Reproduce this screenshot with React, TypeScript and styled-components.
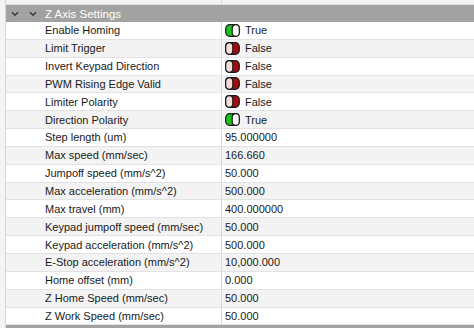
import React from "react";
import styled, { createGlobalStyle } from "styled-components";

const GlobalStyle = createGlobalStyle`
  html, body {
    margin: 0;
    padding: 0;
    background: #ffffff;
    overflow: hidden;
  }
  body {
    font-family: "Liberation Sans", Arial, sans-serif;
    font-size: 11px;
    color: #1a1a1a;
  }
`;

const Frame = styled.div`
  width: 474px;
  height: 328px;
  display: flex;
  background: #f0f0f0;
  overflow: hidden;
`;

const Gutter = styled.div`
  width: 5px;
  flex: 0 0 5px;
  background: #f4f4f4;
  border-right: 1px solid #d6d6d6;
`;

const Grid = styled.div`
  flex: 1;
  display: flex;
  flex-direction: column;
  background: #ffffff;
`;

const Row = styled.div<{ $alt?: boolean }>`
  display: flex;
  height: 17.85px;
  flex: 0 0 auto;
  background: ${(p) => (p.$alt ? "#f3f3f3" : "#ffffff")};
  border-bottom: 1px solid #e2e2e2;
  box-sizing: border-box;
`;

const NameCell = styled.div`
  width: 216px;
  flex: 0 0 216px;
  padding-left: 39px;
  box-sizing: border-box;
  border-right: 1px solid #d9d9d9;
  display: flex;
  align-items: center;
  white-space: nowrap;
  overflow: hidden;
`;

const ValueCell = styled.div`
  flex: 1;
  display: flex;
  align-items: center;
  padding-left: 3px;
  gap: 5px;
  white-space: nowrap;
`;

const PartialRow = styled(Row)`
  height: 5px;
`;

const Header = styled.div`
  height: 17px;
  flex: 0 0 auto;
  background: #a2a2a2;
  display: flex;
  align-items: center;
  color: #ffffff;
  font-size: 11.5px;
  padding-left: 5px;
  gap: 6px;
`;

const Chevrons = styled.div`
  display: flex;
  gap: 10px;
  align-items: center;
  margin-right: 2px;
`;

const Footer = styled.div`
  flex: 1;
  background: #a2a2a2;
`;

const Chevron = () => (
  <svg width="8" height="6" viewBox="0 0 8 6">
    <path d="M1 1.2 L4 4.2 L7 1.2" fill="none" stroke="#3c3c3c" strokeWidth="1.6" />
  </svg>
);

const Toggle = ({ on }: { on: boolean }) => (
  <svg width="15" height="13" viewBox="0 0 15 13">
    {on ? (
      <>
        <rect x="0.7" y="0.7" width="13.6" height="11.6" rx="4" fill="#1bc41b" stroke="#1a1a1a" strokeWidth="1.2" />
        <rect x="7.2" y="0.7" width="7.1" height="11.6" rx="3.5" fill="#ffffff" stroke="#1a1a1a" strokeWidth="1.2" />
      </>
    ) : (
      <>
        <rect x="0.7" y="0.7" width="13.6" height="11.6" rx="4" fill="#a00e0e" stroke="#1a1a1a" strokeWidth="1.2" />
        <rect x="0.7" y="0.7" width="7.1" height="11.6" rx="3.5" fill="#f4dcdc" stroke="#1a1a1a" strokeWidth="1.2" />
      </>
    )}
  </svg>
);

type Item = { name: string; bool?: boolean; value?: string };

const items: Item[] = [
  { name: "Enable Homing", bool: true },
  { name: "Limit Trigger", bool: false },
  { name: "Invert Keypad Direction", bool: false },
  { name: "PWM Rising Edge Valid", bool: false },
  { name: "Limiter Polarity", bool: false },
  { name: "Direction Polarity", bool: true },
  { name: "Step length (um)", value: "95.000000" },
  { name: "Max speed (mm/sec)", value: "166.660" },
  { name: "Jumpoff speed (mm/s^2)", value: "50.000" },
  { name: "Max acceleration (mm/s^2)", value: "500.000" },
  { name: "Max travel (mm)", value: "400.000000" },
  { name: "Keypad jumpoff speed (mm/sec)", value: "50.000" },
  { name: "Keypad acceleration (mm/s^2)", value: "500.000" },
  { name: "E-Stop acceleration (mm/s^2)", value: "10,000.000" },
  { name: "Home offset (mm)", value: "0.000" },
  { name: "Z Home Speed (mm/sec)", value: "50.000" },
  { name: "Z Work Speed (mm/sec)", value: "50.000" },
];

export default function App() {
  return (
    <>
      <GlobalStyle />
      <Frame>
        <Gutter />
        <Grid>
          <PartialRow $alt>
            <NameCell />
            <ValueCell />
          </PartialRow>
          <Header>
            <Chevrons>
              <Chevron />
              <Chevron />
            </Chevrons>
            Z Axis Settings
          </Header>
          {items.map((it, i) => (
            <Row key={it.name} $alt={i % 2 === 1}>
              <NameCell>{it.name}</NameCell>
              <ValueCell>
                {it.bool !== undefined ? (
                  <>
                    <Toggle on={it.bool} />
                    {it.bool ? "True" : "False"}
                  </>
                ) : (
                  it.value
                )}
              </ValueCell>
            </Row>
          ))}
          <Footer />
        </Grid>
      </Frame>
    </>
  );
}
